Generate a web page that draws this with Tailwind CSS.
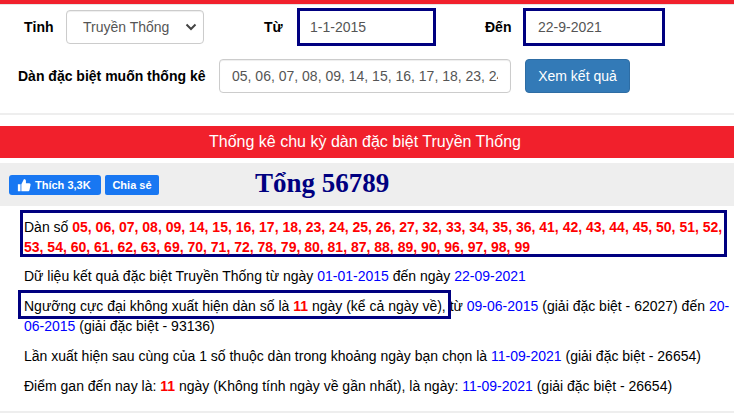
<!DOCTYPE html>
<html lang="vi">
<head>
    <meta charset="UTF-8">
    <meta name="viewport" content="width=device-width, initial-scale=1.0">
    <title>Thống kê chu kỳ dàn đặc biệt</title>
    <script src="https://cdn.jsdelivr.net/npm/@tailwindcss/browser@4"></script>
</head>
<body class="bg-white font-['Liberation_Sans',Arial,sans-serif] text-[14px] leading-[20px] text-[#222] h-[413px] overflow-hidden relative">

    <!-- Top bar -->
    <div class="h-1 bg-[#f1202c]"></div>
    <div class="h-px bg-[#e5e5e5]"></div>

    <!-- Filter form -->
    <div class="h-[108px] border-b-2 border-[#eee] box-content">
        <div class="flex items-center pt-[3px] h-[38px] box-content">
            <label class="ml-[24px] w-[42px] font-bold text-black">Tỉnh</label>
            <div class="w-[138px] h-[34px] border border-[#ccc] rounded flex items-center justify-between pl-[16px] pr-[6px] text-[#555] shadow-[inset_0_1px_1px_rgba(0,0,0,0.07)]">
                <span>Truyền Thống</span>
                <svg width="12" height="8" viewBox="0 0 12 8" fill="none" stroke="#444" stroke-width="2"><path d="M1.500 1.500L6 6l4.500-4.500"/></svg>
            </div>
            <label class="ml-[60px] w-[33px] font-bold text-black">Từ</label>
            <div class="w-[139px] h-[38px] border-[3px] border-[#000080] flex items-center pl-[10px] text-[#555]">1-1-2015</div>
            <label class="ml-[49px] w-[38px] font-bold text-black">Đến</label>
            <div class="w-[142px] h-[38px] border-[3px] border-[#000080] flex items-center pl-[12px] text-[#555]">22-9-2021</div>
        </div>
        <div class="flex items-center mt-[13px]">
            <label class="ml-[18px] w-[201px] font-bold text-black">Dàn đặc biệt muốn thống kê</label>
            <input class="w-[292px] h-[34px] border border-[#ccc] rounded px-[12px] text-[#555] shadow-[inset_0_1px_1px_rgba(0,0,0,0.07)]" value="05, 06, 07, 08, 09, 14, 15, 16, 17, 18, 23, 24, 25">
            <button class="ml-[14px] w-[105px] h-[34px] bg-[#337ab7] border border-[#2e6da4] rounded text-white">Xem kết quả</button>
        </div>
    </div>

    <!-- Title banner -->
    <div class="mt-[11px] h-[32px] bg-[#f1202c] text-white text-[16px] flex items-center justify-center pr-[4px]">Thống kê chu kỳ dàn đặc biệt Truyền Thống</div>

    <!-- Social row -->
    <div class="mt-[5px] h-[43px] bg-[#eee] flex items-center pl-[9px]">
        <div class="w-[92px] h-[20px] bg-[#1877f2] rounded-[3px] flex items-center pl-[8px] text-white text-[11px] font-bold">
            <svg width="14" height="14" viewBox="0 0 16 16" fill="#fff"><path d="M1 7h3v8H1zM5 7l3-6c1.300 0 2.200.9 2.200 2.200V6H14c1 0 1.700.9 1.500 1.800l-1.200 5.800c-.2.800-.8 1.400-1.700 1.400H5z"/></svg>
            <span class="ml-[4px]">Thích 3,3K</span>
        </div>
        <div class="ml-[4px] w-[54px] h-[20px] bg-[#1877f2] rounded-[2px] flex items-center justify-center text-white text-[11px] font-bold">Chia sẻ</div>
        <div class="ml-[96px] -mt-[3px] font-['Liberation_Serif',serif] font-bold text-[27px] text-[#000080]">Tổng 56789</div>
    </div>

    <!-- Result text -->
    <div class="pl-[20px] pr-[7px] pt-[4px] relative">
        <div class="border-[3px] border-[#000080] h-[47px] pl-[1px] pt-[4px] text-black whitespace-nowrap">Dàn số <b class="text-[#f00]">05, 06, 07, 08, 09, 14, 15, 16, 17, 18, 23, 24, 25, 26, 27, 32, 33, 34, 35, 36, 41, 42, 43, 44, 45, 50, 51, 52,<br>53, 54, 60, 61, 62, 63, 69, 70, 71, 72, 78, 79, 80, 81, 87, 88, 89, 90, 96, 97, 98, 99</b></div>
        <div class="pl-[4px] text-black whitespace-nowrap">
            <p class="mt-[9px]">Dữ liệu kết quả đặc biệt Truyền Thống từ ngày <span class="text-[#00f]">01-01-2015</span> đến ngày <span class="text-[#00f]">22-09-2021</span></p>
            <p class="mt-[10px]">Ngưỡng cực đại không xuất hiện dàn số là <b class="text-[#f00]">11</b> ngày (kể cả ngày về), từ <span class="text-[#00f]">09-06-2015</span> (giải đặc biệt - 62027) đến <span class="text-[#00f]">20-<br>06-2015</span> (giải đặc biệt - 93136)</p>
            <p class="mt-[10px]">Lần xuất hiện sau cùng của 1 số thuộc dàn trong khoảng ngày bạn chọn là <span class="text-[#00f]">11-09-2021</span> (giải đặc biệt - 26654)</p>
            <p class="mt-[10px]">Điểm gan đến nay là: <b class="text-[#f00]">11</b> ngày (Không tính ngày về gần nhất), là ngày: <span class="text-[#00f]">11-09-2021</span> (giải đặc biệt - 26654)</p>
        </div>
        <!-- Annotation box over the threshold line -->
        <div class="absolute left-[18px] top-[84px] w-[433px] h-[29px] border-[3px] border-[#000080]"></div>
    </div>

    <div class="absolute left-0 right-0 top-[411px] h-[2px] bg-[#eee]"></div>
</body>
</html>
